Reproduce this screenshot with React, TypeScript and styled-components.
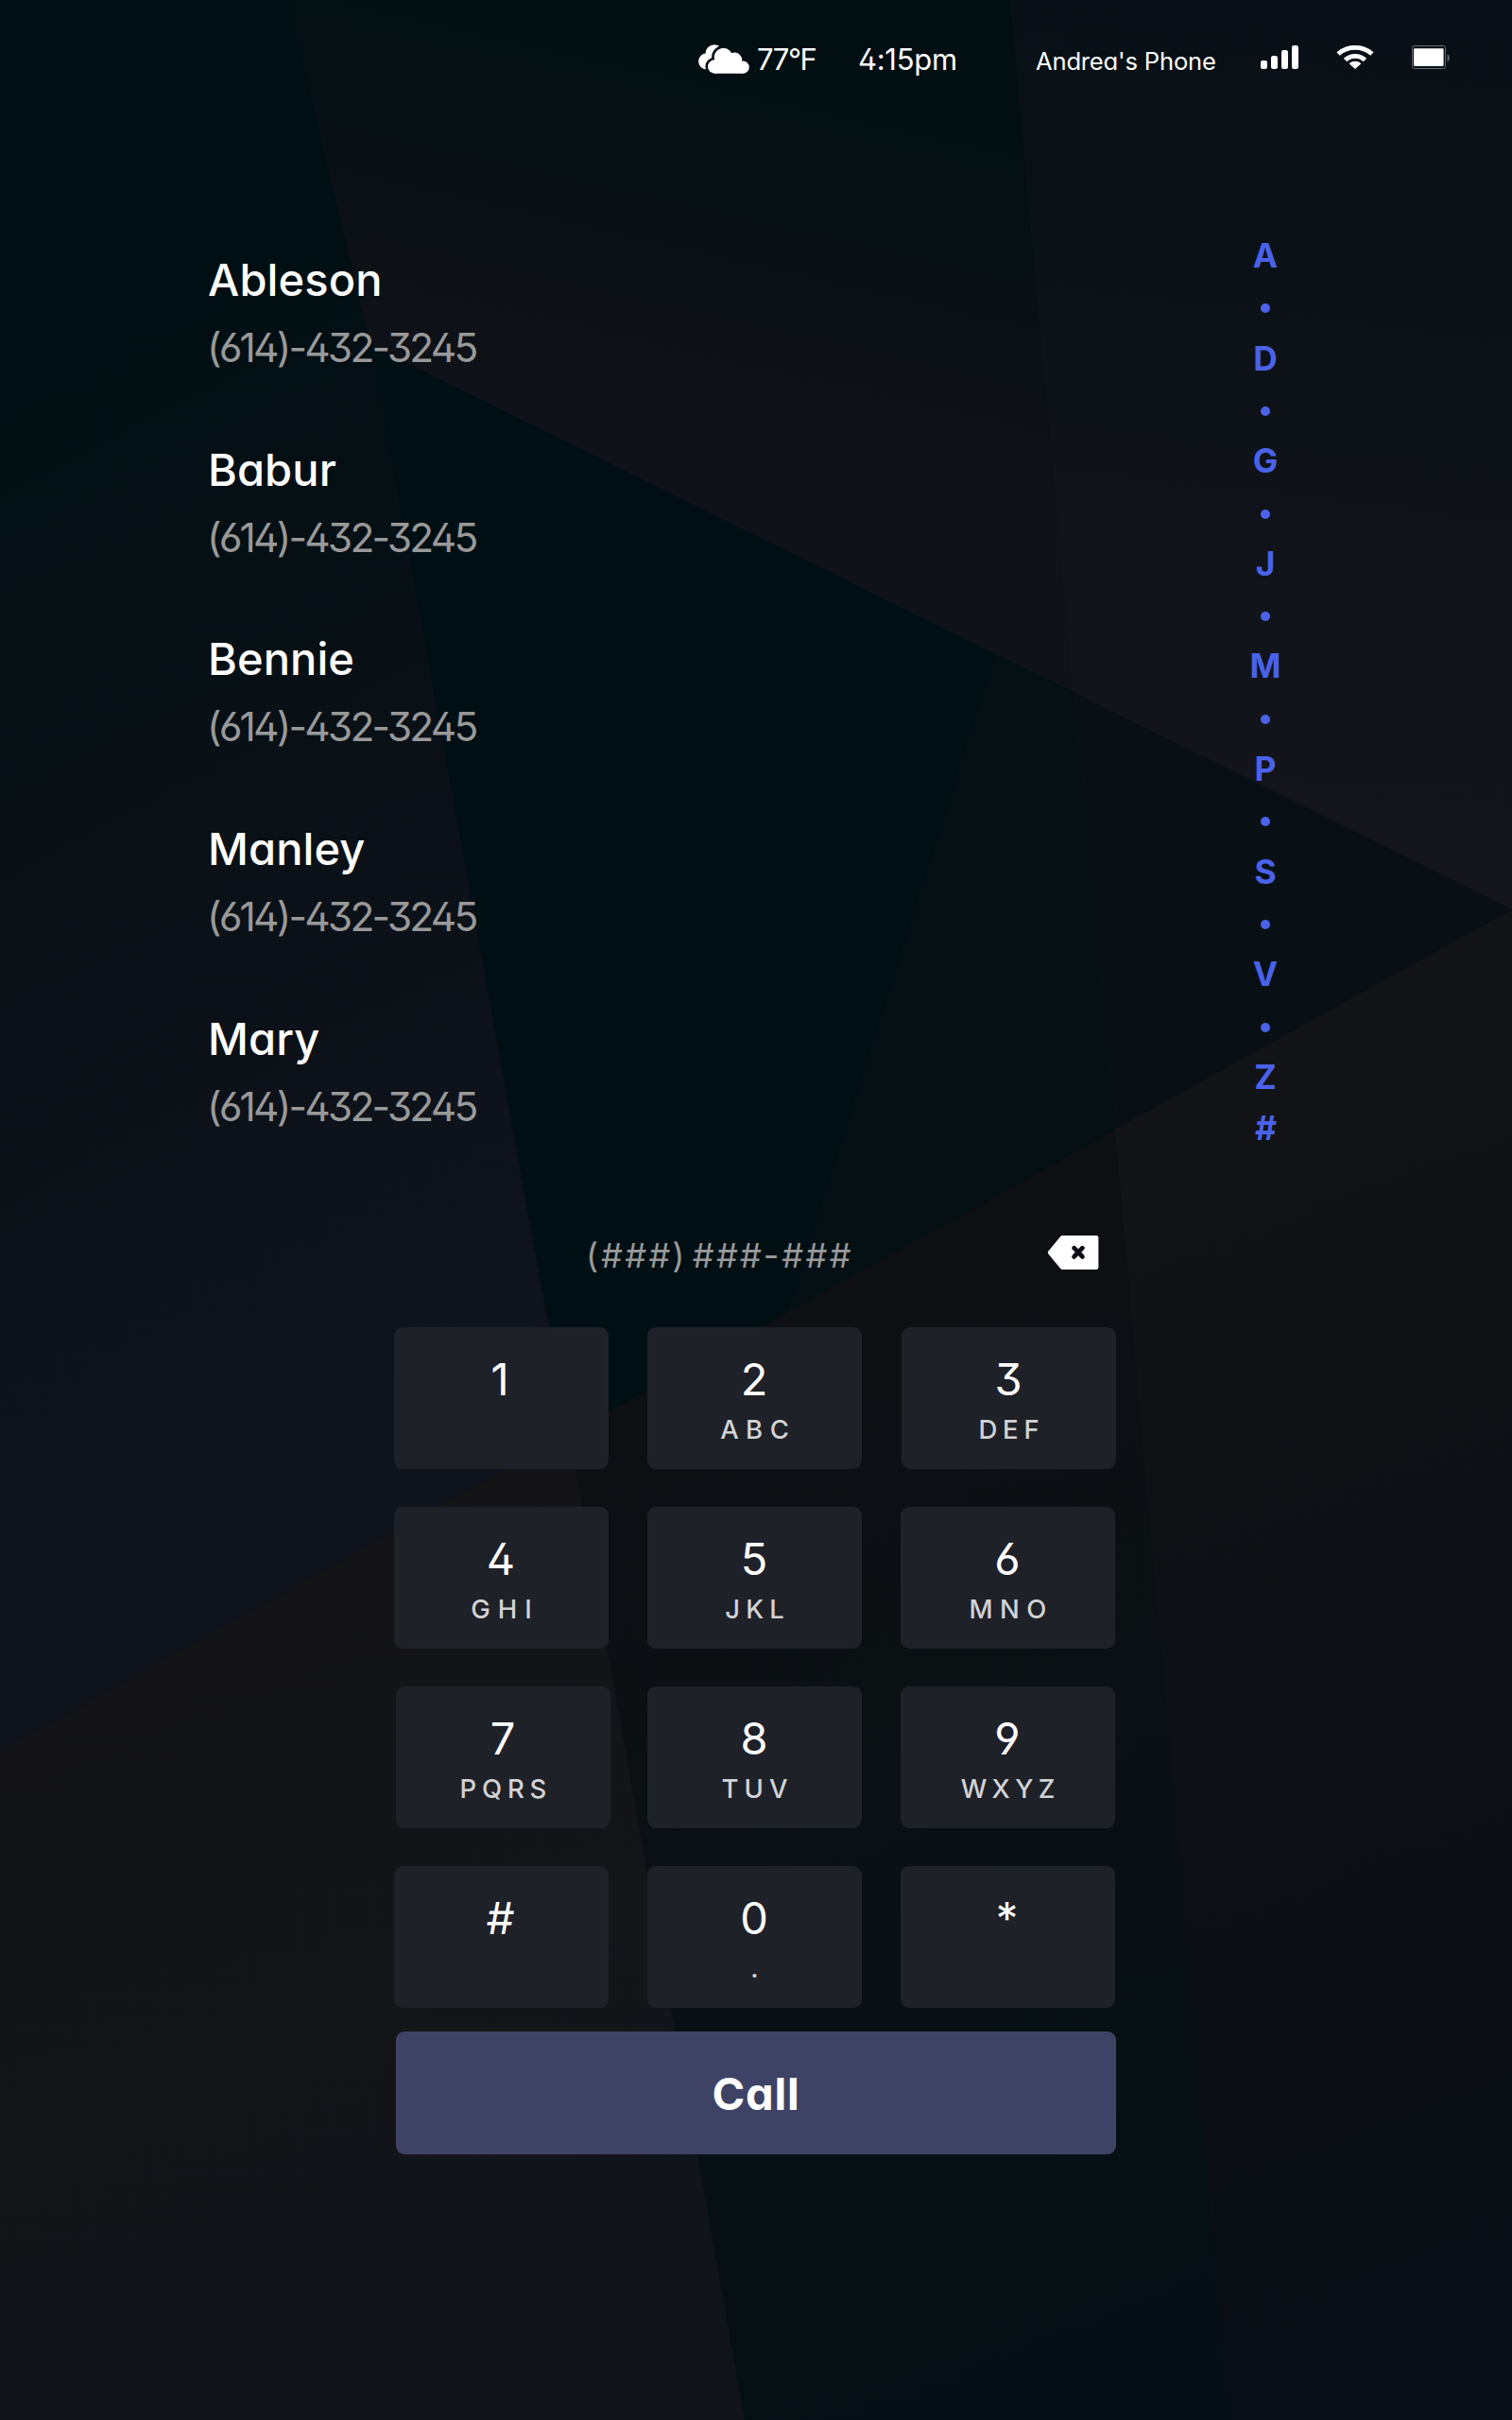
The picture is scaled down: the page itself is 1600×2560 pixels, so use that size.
import React from "react";
import styled, { createGlobalStyle } from "styled-components";

const GlobalStyle = createGlobalStyle`
  * { box-sizing: border-box; }
  body {
    margin: 0;
    background: #000f13;
    color: #fff;
    font-family: Inter, "Open Sans", sans-serif;
    font-feature-settings: "cv11", "ss01";
  }
`;

const Screen = styled.main`
  position: relative;
  width: 1600px;
  height: 2560px;
  overflow: hidden;
  display: flex;
  flex-direction: column;
`;

const Backdrop = styled.svg`
  position: absolute;
  inset: 0;
  z-index: -1;
`;

/* ---------- status bar ---------- */

const StatusBar = styled.header`
  display: flex;
  align-items: flex-start;
  justify-content: flex-end;
  height: 244px;
  padding: 47px 66px 0 0;

  svg { display: block; flex: none; }
`;

const StatusText = styled.span<{ $size: number; $width: number; $tracking?: number }>`
  width: ${(p) => p.$width}px;
  margin-top: -5px;
  font-size: ${(p) => p.$size}px;
  line-height: ${(p) => (p.$size > 28 ? 41.5 : 45.5)}px;
  letter-spacing: ${(p) => p.$tracking ?? 0}px;
  white-space: nowrap;
`;

const CloudIcon = styled.svg`margin-right: 8px;`;
const SignalIcon = styled.svg`margin: 1px 40px 0 0;`;
const WifiIcon = styled.svg`margin: 1px 40px 0 0;`;
const BatteryIcon = styled.svg`margin-top: 1px;`;

/* ---------- contacts ---------- */

const Directory = styled.section`
  display: flex;
  justify-content: space-between;
  height: 1053px;
  padding: 0 236px 0 219px;
`;

const ContactList = styled.ul`
  list-style: none;
  margin: 0;
  padding: 24px 0 0;
  display: flex;
  flex-direction: column;
  gap: 75.7px;
`;

const Contact = styled.li`
  display: flex;
  flex-direction: column;
  gap: 19px;
  height: 125px;
`;

const Name = styled.span`
  padding-left: 1px;
  font-size: 47px;
  font-weight: 500;
  line-height: 56px;
  letter-spacing: 0.1px;
`;

const Phone = styled.span`
  color: #999;
  font-size: 42.5px;
  line-height: 50px;
  letter-spacing: -2.8px;
`;

const AlphaIndex = styled.nav`
  display: flex;
  flex-direction: column;
  width: 50px;
`;

const IndexRow = styled.span<{ $oblique?: boolean }>`
  display: flex;
  align-items: center;
  justify-content: center;
  height: 54.3px;
  color: #4a62ea;
  font-size: 35.3px;
  font-style: ${(p) => (p.$oblique ? "italic" : "normal")};
  font-weight: 700;
  line-height: 54.3px;
`;

const Dot = styled.i`
  width: 10px;
  height: 10px;
  margin-top: 2px;
  border-radius: 50%;
  background: #4a62ea;
`;

/* ---------- dialer ---------- */

const Dialer = styled.section`
  width: 764px;
  margin-left: 417px;
  display: flex;
  flex-direction: column;
`;

const Entry = styled.div`
  display: flex;
  align-items: flex-start;
  justify-content: space-between;
  height: 107px;
  padding: 10px 18px 0 203px;
`;

const EntryText = styled.span`
  color: #999;
  font-size: 36px;
  line-height: 42px;
  letter-spacing: 2.4px;
  word-spacing: -7px;
  white-space: nowrap;

  em { font-style: italic; }
`;

const Keypad = styled.div`
  display: grid;
  grid-template-columns: repeat(3, 227px);
  gap: 40px 41px;
`;

const Key = styled.button<{ $shift?: number }>`
  display: flex;
  flex-direction: column;
  align-items: center;
  height: 150px;
  margin: 0 ${(p) => -(p.$shift ?? 0)}px 0 ${(p) => p.$shift ?? 0}px;
  padding: 27px 0 0;
  border: 0;
  border-radius: 9px;
  background: #1f2129;
  color: #fff;
  font: inherit;
  font-feature-settings: inherit;
`;

const Digit = styled.span<{ $nudge?: number; $oblique?: boolean }>`
  padding-right: ${(p) => p.$nudge ?? 1}px;
  font-size: 47px;
  font-style: ${(p) => (p.$oblique ? "italic" : "normal")};
  line-height: 56px;
`;

const Letters = styled.span<{ $tracking: number }>`
  margin-top: 8px;
  padding-left: ${(p) => p.$tracking}px;
  color: #d3d3d5;
  font-size: 27.5px;
  font-weight: 500;
  line-height: 34px;
  letter-spacing: ${(p) => p.$tracking}px;
`;

const CallButton = styled.button`
  width: 762px;
  height: 130px;
  margin: 25px 0 0 2px;
  padding: 0;
  border: 0;
  border-radius: 9px;
  background: #3e4366;
  color: #fff;
  font: inherit;
  font-feature-settings: inherit;
  font-size: 47px;
  font-weight: 700;
  letter-spacing: 0.8px;
`;

const contacts = [
  { name: "Ableson", phone: "(614)-432-3245" },
  { name: "Babur", phone: "(614)-432-3245" },
  { name: "Bennie", phone: "(614)-432-3245" },
  { name: "Manley", phone: "(614)-432-3245" },
  { name: "Mary", phone: "(614)-432-3245" },
];

const indexRows = ["A", "", "D", "", "G", "", "J", "", "M", "", "P", "", "S", "", "V", "", "Z", "#"];

type KeyDef = { digit: string; letters?: string; tracking?: number; shift?: number; nudge?: number };

const keys: KeyDef[] = [
  { digit: "1", nudge: 3 },
  { digit: "2", letters: "ABC", tracking: 7.5 },
  { digit: "3", letters: "DEF", tracking: 5.8, shift: 1 },
  { digit: "4", letters: "GHI", tracking: 8 },
  { digit: "5", letters: "JKL", tracking: 6.2 },
  { digit: "6", letters: "MNO", tracking: 7.4 },
  { digit: "7", letters: "PQRS", tracking: 5.8, shift: 2 },
  { digit: "8", letters: "TUV", tracking: 6 },
  { digit: "9", letters: "WXYZ", tracking: 5.3 },
  { digit: "#", nudge: 3 },
  { digit: "0", letters: ".", tracking: 0 },
  { digit: "*", nudge: 2 },
];

function Facets() {
  return (
    <Backdrop width="1600" height="2560" viewBox="0 0 1600 2560">
      <defs>
        <linearGradient id="left" gradientUnits="userSpaceOnUse" x1="0" y1="400" x2="560" y2="1480">
          <stop offset="0" stopColor="#000f13" />
          <stop offset="0.4" stopColor="#091016" />
          <stop offset="0.75" stopColor="#0e121a" />
          <stop offset="1" stopColor="#0f131b" />
        </linearGradient>
        <linearGradient id="top" gradientUnits="userSpaceOnUse" x1="800" y1="80" x2="690" y2="560">
          <stop offset="0" stopColor="#010f13" />
          <stop offset="0.55" stopColor="#0d1115" />
          <stop offset="1" stopColor="#10121a" />
        </linearGradient>
        <linearGradient id="topRight" gradientUnits="userSpaceOnUse" x1="1400" y1="0" x2="1300" y2="850">
          <stop offset="0" stopColor="#090f16" />
          <stop offset="0.25" stopColor="#091116" />
          <stop offset="0.6" stopColor="#0f1319" />
          <stop offset="1" stopColor="#14151c" />
        </linearGradient>
        <linearGradient id="bottomLeft" gradientUnits="userSpaceOnUse" x1="200" y1="1700" x2="540" y2="2560">
          <stop offset="0" stopColor="#141417" />
          <stop offset="0.5" stopColor="#131519" />
          <stop offset="1" stopColor="#101418" />
        </linearGradient>
        <linearGradient id="bottom" gradientUnits="userSpaceOnUse" x1="800" y1="1450" x2="1200" y2="2450">
          <stop offset="0" stopColor="#0d0f13" />
          <stop offset="0.45" stopColor="#0a1013" />
          <stop offset="0.75" stopColor="#071014" />
          <stop offset="1" stopColor="#030f14" />
        </linearGradient>
        <linearGradient id="bottomRight" gradientUnits="userSpaceOnUse" x1="1180" y1="1250" x2="1650" y2="2450">
          <stop offset="0" stopColor="#111316" />
          <stop offset="0.4" stopColor="#0d1014" />
          <stop offset="0.7" stopColor="#0b0f13" />
          <stop offset="0.82" stopColor="#0a0e15" />
          <stop offset="1" stopColor="#070e15" />
        </linearGradient>
      </defs>
      <rect width="1600" height="2560" fill="#000f13" />
      <path d="M0 0H305L392 365L435 600L558 1280L602 1517L0 1853Z" fill="url(#left)" />
      <path d="M305 0H1069L1135 732L392 365Z" fill="url(#top)" />
      <path d="M1069 0H1600V962L1135 732Z" fill="url(#topRight)" />
      <path d="M1053 692L1135 732L1180 1194L833 1389Z" fill="#041014" />
      <path d="M1135 732L1600 962L1180 1196Z" fill="#091015" />
      <path d="M0 1853L602 1517L788 2560H0Z" fill="url(#bottomLeft)" />
      <path d="M602 1517L1180 1195L1300 2560H788Z" fill="url(#bottom)" />
      <path d="M1180 1195L1600 962V2560H1300Z" fill="url(#bottomRight)" />
    </Backdrop>
  );
}

function FrontCloud() {
  return (
    <>
      <circle cx="17.2" cy="23.5" r="7.2" />
      <circle cx="26.5" cy="13.6" r="9.8" />
      <circle cx="38.4" cy="16.4" r="7.8" />
      <circle cx="47.2" cy="24.1" r="6.6" />
      <path d="M17 17H46V24H47V30.7H17Z" />
    </>
  );
}

export default function App() {
  return (
    <Screen>
      <GlobalStyle />
      <Facets />

      <StatusBar>
        <CloudIcon width="54" height="31" viewBox="0 0 54 31" fill="#fff">
          <mask id="cloudGap" maskUnits="userSpaceOnUse" x="0" y="0" width="54" height="31">
            <rect width="54" height="31" fill="#fff" />
            <g fill="#000" stroke="#000" strokeWidth="5.2"><FrontCloud /></g>
          </mask>
          <g mask="url(#cloudGap)">
            <circle cx="8.5" cy="18" r="8.4" />
            <circle cx="17" cy="9.8" r="9.6" />
          </g>
          <FrontCloud />
        </CloudIcon>
        <StatusText $size={31} $width={107} $tracking={-1.4}>77°F</StatusText>
        <StatusText $size={31} $width={188} $tracking={-0.3}>4:15pm</StatusText>
        <StatusText $size={25.6} $width={238} $tracking={-0.2}>Andrea's Phone</StatusText>
        <SignalIcon width="40" height="25" viewBox="0 0 40 25" fill="#fff">
          <rect x="0" y="16" width="7" height="9" rx="2.2" />
          <rect x="11" y="11" width="7" height="14" rx="2.2" />
          <rect x="22" y="5" width="7" height="20" rx="2.2" />
          <rect x="33" y="0" width="7" height="25" rx="2.2" />
        </SignalIcon>
        <WifiIcon width="40" height="25" viewBox="0 0 40 25" fill="#fff">
          <path d="M0.4 7.2A30 30 0 0 1 39.6 7.2L36.2 10.7A25.2 25.2 0 0 0 3.8 10.7Z" />
          <path d="M7.8 13.7A18 18 0 0 1 32.2 13.7L28.6 17.2A12.4 12.4 0 0 0 11.4 17.2Z" />
          <path d="M13.6 19.2A9.8 9.8 0 0 1 26.4 19.2L20 25Z" />
        </WifiIcon>
        <BatteryIcon width="40" height="25" viewBox="0 0 40 25">
          <rect x="0.5" y="0.5" width="35" height="24" rx="2" fill="none" stroke="#686c70" />
          <rect x="2" y="3.3" width="31.6" height="18.6" rx="0.8" fill="#fff" />
          <path d="M37.6 9C40.4 10.5 40.4 16 37.6 17.4Z" fill="#686c70" />
        </BatteryIcon>
      </StatusBar>

      <Directory>
        <ContactList>
          {contacts.map((c) => (
            <Contact key={c.name}>
              <Name>{c.name}</Name>
              <Phone>{c.phone}</Phone>
            </Contact>
          ))}
        </ContactList>
        <AlphaIndex>
          {indexRows.map((letter, i) => (
            <IndexRow key={i} $oblique={letter === "#"}>{letter || <Dot />}</IndexRow>
          ))}
        </AlphaIndex>
      </Directory>

      <Dialer>
        <Entry>
          <EntryText>(<em>###</em>) <em>###</em>-<em>###</em></EntryText>
          <svg width="55" height="36" viewBox="0 0 55 36">
            <path d="M1.4 16.4L14 1.2Q15 0 16.4 0H52Q54.4 0 54.4 2.4V33.6Q54.4 36 52 36H16.4Q15 36 14 34.8L1.4 19.6Q0.2 18 1.4 16.4Z" fill="#fff" />
            <path d="M28.6 13.2L37.4 22.4M37.4 13.2L28.6 22.4" stroke="#0c0e13" strokeWidth="4.8" strokeLinecap="round" />
          </svg>
        </Entry>
        <Keypad>
          {keys.map((k) => (
            <Key key={k.digit} $shift={k.shift}>
              <Digit $nudge={k.nudge} $oblique={k.digit === "#"}>{k.digit}</Digit>
              {k.letters && <Letters $tracking={k.tracking ?? 0}>{k.letters}</Letters>}
            </Key>
          ))}
        </Keypad>
        <CallButton>Call</CallButton>
      </Dialer>
    </Screen>
  );
}
